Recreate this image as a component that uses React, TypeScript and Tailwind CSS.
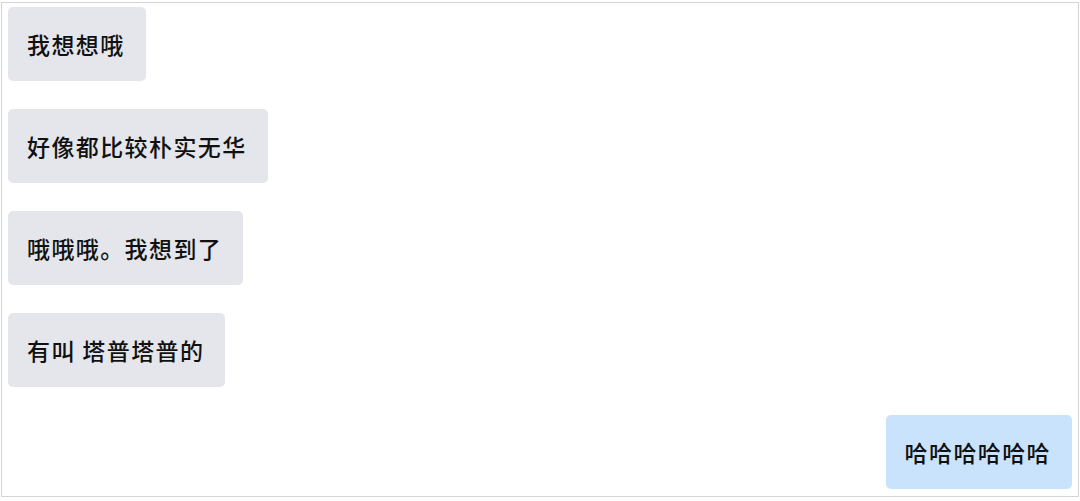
import React from 'react';

const messages = [
  { text: '我想想哦', mine: false },
  { text: '好像都比较朴实无华', mine: false },
  { text: '哦哦哦。我想到了', mine: false },
  { text: '有叫 塔普塔普的', mine: false },
  { text: '哈哈哈哈哈哈', mine: true },
];

export default function App() {
  return (
    <div className="w-[1080px] h-[501px] bg-white pl-px pt-[2px]">
      <div
        className="w-[1078px] h-[495px] border border-[#d4d4d4] flex flex-col gap-[28px] pl-[6px] pr-[6px] pt-[4px]"
        style={{ fontFamily: '"Noto Sans CJK SC", "Noto Sans", sans-serif' }}
      >
        {messages.map((m, i) => (
          <div key={i} className={m.mine ? 'flex justify-end' : 'flex justify-start'}>
            <div
              className={
                (m.mine ? 'bg-[#c9e3fc]' : 'bg-[#e4e6eb]') +
                ' h-[74px] flex items-center rounded-[5px] pl-[19px] pr-[21px] text-[23px] font-medium tracking-[1.4px] text-[#111111]'
              }
            >
              {m.text}
            </div>
          </div>
        ))}
      </div>
    </div>
  );
}
